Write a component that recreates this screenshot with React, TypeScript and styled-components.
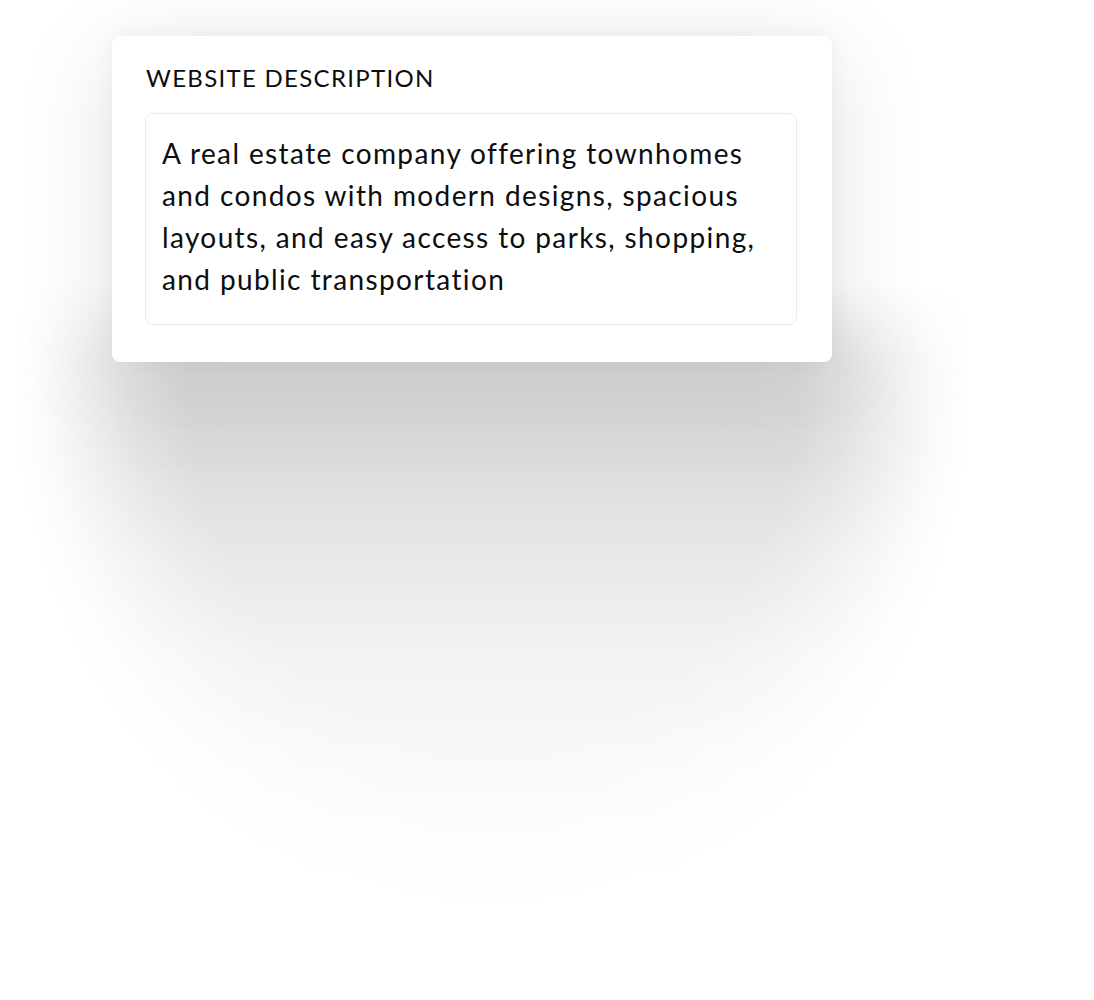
import React from 'react';
import styled, { createGlobalStyle } from 'styled-components';

const GlobalStyle = createGlobalStyle`
  html {
    background: #ffffff;
  }
  body {
    margin: 0;
    padding: 0;
    font-family: 'Lato', 'Noto Sans', Arial, sans-serif;
    color: #111;
  }
`;

const Page = styled.div`
  isolation: isolate;
  min-height: 1000px;
  padding: 36px 0 0 112px;
  box-sizing: border-box;
  overflow: hidden;
`;

// tight shadow around the card; the long soft tail below is a masked gradient
// (huge box-shadow blurs render with tile seams in headless chrome)
const Card = styled.section`
  position: relative;
  width: 720px;
  box-sizing: border-box;
  padding: 26px 35px 37px 33px;
  background: #fff;
  border-radius: 8px;
  box-shadow:
    0 -2px 24px rgba(0, 0, 0, 0.04),
    0 20px 100px rgba(0, 0, 0, 0.12);

  &::before {
    content: '';
    position: absolute;
    z-index: -1;
    left: -100px;
    right: -140px;
    top: calc(100% - 80px);
    height: 680px;
    background: linear-gradient(
      to bottom,
      rgba(0, 0, 0, 0) 0,
      rgba(0, 0, 0, 0.13) 80px,
      rgba(0, 0, 0, 0.145) 120px,
      rgba(0, 0, 0, 0.14) 173px,
      rgba(0, 0, 0, 0.09) 273px,
      rgba(0, 0, 0, 0.05) 373px,
      rgba(0, 0, 0, 0.028) 473px,
      rgba(0, 0, 0, 0.012) 573px,
      rgba(0, 0, 0, 0) 680px
    );
    -webkit-mask-image: radial-gradient(
      ellipse 480px 600px at 50% 80px,
      #000 64%,
      rgba(0, 0, 0, 0.78) 74%,
      rgba(0, 0, 0, 0.42) 85%,
      rgba(0, 0, 0, 0.14) 93%,
      transparent 100%
    );
    mask-image: radial-gradient(
      ellipse 480px 600px at 50% 80px,
      #000 64%,
      rgba(0, 0, 0, 0.78) 74%,
      rgba(0, 0, 0, 0.42) 85%,
      rgba(0, 0, 0, 0.14) 93%,
      transparent 100%
    );
  }
`;

const Label = styled.h2`
  margin: 0 0 19px 1px;
  font-size: 24px;
  line-height: 32px;
  font-weight: 400;
  letter-spacing: 1.3px;
  text-transform: uppercase;
  color: #0d0d0d;
`;

const Description = styled.div`
  box-sizing: border-box;
  width: 652px;
  height: 212px;
  padding: 18px 16px 0 16px;
  border: 1px solid #ebebeb;
  border-radius: 8px;
  font-size: 28px;
  line-height: 42px;
  letter-spacing: 1.38px;
  color: #0d0d0d;
`;

const App: React.FC = () => {
  return (
    <>
      <GlobalStyle />
      <Page>
        <Card>
          <Label>Website Description</Label>
          <Description>
            A real estate company offering townhomes and condos with modern designs, spacious
            layouts, and easy access to parks, shopping, and public transportation
          </Description>
        </Card>
      </Page>
    </>
  );
};

export default App;
